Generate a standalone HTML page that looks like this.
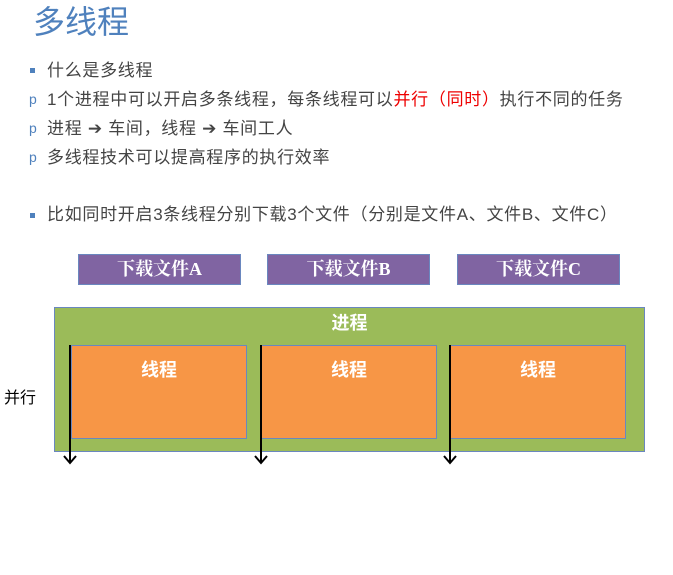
<!DOCTYPE html><html><head><meta charset="utf-8"><style>
body{margin:0;width:673px;height:575px;background:#fff;position:relative;overflow:hidden;font-family:"Liberation Sans","Noto Sans CJK SC",sans-serif}
.a{position:absolute;white-space:nowrap}
.t{left:33px;top:-3px;font-size:32px;color:#4f81bd}
.r{left:47px;font-size:17px;letter-spacing:0.7px;color:#444;line-height:20px}
.m{left:29px;font-size:14px;color:#4f81bd;line-height:20px}
.sq{position:absolute;left:30px;width:5px;height:5px;background:#4f81bd}
.p{position:absolute;top:254px;height:29px;width:161px;background:#8064a2;border:1px solid #6a87bf;color:#fff;font-family:"Liberation Serif","Noto Serif CJK SC",serif;font-weight:bold;font-size:18px;text-align:center;line-height:29px}
.g{position:absolute;left:54px;top:307px;width:589px;height:143px;background:#9bbb59;border:1px solid #6a87bf}
.o{position:absolute;top:345px;height:94px;width:176px;background:#f79646;border:1px solid #6a87bf;color:#fff;font-size:18px;font-weight:bold;text-align:center;padding-top:10px;box-sizing:border-box}
</style></head><body>
<div class="a t">多线程</div>
<div class="sq" style="top:68px"></div><div class="a r" style="top:61px">什么是多线程</div>
<div class="a m" style="top:89px">p</div><div class="a r" style="top:90px">1个进程中可以开启多条线程，每条线程可以<span style="color:#e00">并行（同时）</span>执行不同的任务</div>
<div class="a m" style="top:118px">p</div><div class="a r" style="top:119px">进程 ➔ 车间，线程 ➔ 车间工人</div>
<div class="a m" style="top:147px">p</div><div class="a r" style="top:148px">多线程技术可以提高程序的执行效率</div>
<div class="sq" style="top:213px"></div><div class="a r" style="top:205px">比如同时开启3条线程分别下载3个文件（分别是文件A、文件B、文件C）</div>
<div class="p" style="left:78px">下载文件A</div>
<div class="p" style="left:267px">下载文件B</div>
<div class="p" style="left:457px">下载文件C</div>
<div class="g"><div style="text-align:center;color:#fff;font-size:18px;font-weight:bold;margin-top:1px">进程</div></div>
<div class="o" style="left:71px">线程</div>
<div class="o" style="left:261px">线程</div>
<div class="o" style="left:450px">线程</div>
<div class="a" style="left:4px;top:384px;font-size:16px;color:#000">并行</div>
<svg class="a" style="left:0;top:0" width="673" height="575">
<g stroke="#000" stroke-width="2" fill="none">
<path d="M70 345V463M64 456l6 7 6-7"/><path d="M261 345V463M255 456l6 7 6-7"/><path d="M450 345V463M444 456l6 7 6-7"/>
</g></svg>
</body></html>
